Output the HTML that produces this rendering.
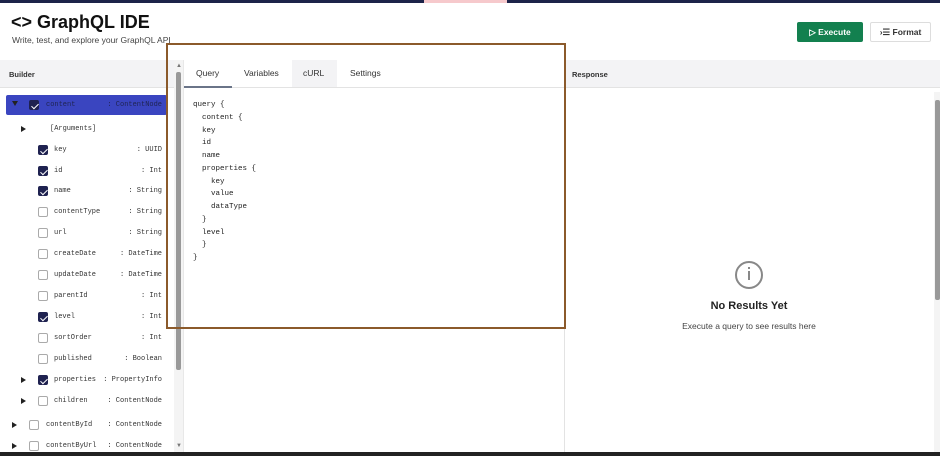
<!DOCTYPE html>
<html><head><style>
*{margin:0;padding:0;box-sizing:border-box}
body{width:940px;height:456px;overflow:hidden;background:#fff;font-family:"Liberation Sans",sans-serif;position:relative}
.a{position:absolute}
.mono{font-family:"Liberation Mono",monospace;font-size:7px;color:#333}
.cb{position:absolute;width:10px;height:10px;border:1px solid #aaa;border-radius:2px;background:#fff}
.cb.on{background:#1f2250;border-color:#1f2250}
.cb.on:after{content:"";position:absolute;left:3px;top:0.5px;width:3px;height:6px;border:solid #fff;border-width:0 1.6px 1.6px 0;transform:rotate(45deg)}
.tri{position:absolute;width:0;height:0;border-left:5px solid #222;border-top:3.5px solid transparent;border-bottom:3.5px solid transparent}
.nm{position:absolute}
.ty{position:absolute;right:778px;text-align:right;white-space:nowrap}
</style></head><body>
<div class="a" style="left:0;top:0;width:940px;height:3px;background:#1c2349"></div>
<div class="a" style="left:424px;top:0;width:83px;height:3px;background:#f6c9cc"></div>
<div class="a" style="left:0;top:452px;width:940px;height:4px;background:#222"></div>

<div class="a" style="left:11px;top:12px;font-size:18px;font-weight:bold;color:#111">&lt;&gt;&nbsp;GraphQL IDE</div>
<div class="a" style="left:12px;top:35px;font-size:8.5px;color:#444">Write, test, and explore your GraphQL API</div>

<div class="a" style="left:797px;top:22px;width:66px;height:20px;background:#13804f;border-radius:2px;color:#fff;font-size:8.5px;font-weight:bold;line-height:20px;text-align:center">▷ Execute</div>
<div class="a" style="left:870px;top:22px;width:61px;height:20px;border:1px solid #ddd;border-radius:2px;color:#333;font-size:8.5px;font-weight:bold;line-height:18px;text-align:center">›☰ Format</div>

<div class="a" style="left:0;top:60px;width:940px;height:28px;background:#f3f3f5;border-bottom:1px solid #e3e3e3"></div>
<div class="a" style="left:9px;top:70px;font-size:7.5px;font-weight:bold;color:#333">Builder</div>
<div class="a" style="left:572px;top:70px;font-size:7.5px;font-weight:bold;color:#333">Response</div>
<div class="a" style="left:183px;top:60px;width:381px;height:28px;background:#fff;border-bottom:1px solid #e3e3e3"></div>
<div class="a" style="left:292px;top:60px;width:45px;height:27px;background:#f3f3f5"></div>
<div class="a" style="left:196px;top:68px;font-size:8.5px;color:#333">Query</div>
<div class="a" style="left:184px;top:86px;width:48px;height:2px;background:#6a7488"></div>
<div class="a" style="left:244px;top:68px;font-size:8.5px;color:#333">Variables</div>
<div class="a" style="left:303px;top:68px;font-size:8.5px;color:#333">cURL</div>
<div class="a" style="left:350px;top:68px;font-size:8.5px;color:#333">Settings</div>
<div class="a" style="left:183px;top:60px;width:1px;height:392px;background:#e8e8e8"></div>
<div class="a" style="left:564px;top:60px;width:1px;height:392px;background:#e3e3e3"></div>

<div class="a" style="left:174px;top:60px;width:9px;height:392px;background:#f4f4f4"></div>
<div class="a" style="left:176px;top:72px;width:5px;height:298px;background:#999;border-radius:2px"></div>
<div class="a" style="left:176px;top:63px;font-size:6px;color:#777">▲</div>
<div class="a" style="left:176px;top:443px;font-size:6px;color:#777">▼</div>
<div class="a" style="left:934px;top:92px;width:6px;height:360px;background:#f4f4f4"></div>
<div class="a" style="left:935px;top:100px;width:5px;height:200px;background:#999;border-radius:2px"></div>

<div class="a" style="left:6px;top:95px;width:161px;height:20px;background:#3a45c0;border-radius:2px"></div>
<div class="a" style="left:12px;top:101px;width:0;height:0;border-top:5px solid #222;border-left:3.5px solid transparent;border-right:3.5px solid transparent"></div>
<div class="cb on" style="left:29px;top:100px"></div>
<div class="mono">
<div class="nm" style="left:46px;top:101px;color:#1f2450">content</div>
<div class="ty" style="top:101px;color:#1f2450">: ContentNode</div>

<div class="tri" style="left:21px;top:126px"></div>
<div class="nm" style="left:50px;top:125px">[Arguments]</div>

<div class="cb on" style="left:38px;top:145px"></div><div class="nm" style="left:54px;top:146px">key</div><div class="ty" style="top:146px">: UUID</div>
<div class="cb on" style="left:38px;top:166px"></div><div class="nm" style="left:54px;top:167px">id</div><div class="ty" style="top:167px">: Int</div>
<div class="cb on" style="left:38px;top:186px"></div><div class="nm" style="left:54px;top:187px">name</div><div class="ty" style="top:187px">: String</div>
<div class="cb" style="left:38px;top:207px"></div><div class="nm" style="left:54px;top:208px">contentType</div><div class="ty" style="top:208px">: String</div>
<div class="cb" style="left:38px;top:228px"></div><div class="nm" style="left:54px;top:229px">url</div><div class="ty" style="top:229px">: String</div>
<div class="cb" style="left:38px;top:249px"></div><div class="nm" style="left:54px;top:250px">createDate</div><div class="ty" style="top:250px">: DateTime</div>
<div class="cb" style="left:38px;top:270px"></div><div class="nm" style="left:54px;top:271px">updateDate</div><div class="ty" style="top:271px">: DateTime</div>
<div class="cb" style="left:38px;top:291px"></div><div class="nm" style="left:54px;top:292px">parentId</div><div class="ty" style="top:292px">: Int</div>
<div class="cb on" style="left:38px;top:312px"></div><div class="nm" style="left:54px;top:313px">level</div><div class="ty" style="top:313px">: Int</div>
<div class="cb" style="left:38px;top:333px"></div><div class="nm" style="left:54px;top:334px">sortOrder</div><div class="ty" style="top:334px">: Int</div>
<div class="cb" style="left:38px;top:354px"></div><div class="nm" style="left:54px;top:355px">published</div><div class="ty" style="top:355px">: Boolean</div>
<div class="tri" style="left:21px;top:377px"></div>
<div class="cb on" style="left:38px;top:375px"></div><div class="nm" style="left:54px;top:376px">properties</div><div class="ty" style="top:376px">: PropertyInfo</div>
<div class="tri" style="left:21px;top:398px"></div>
<div class="cb" style="left:38px;top:396px"></div><div class="nm" style="left:54px;top:397px">children</div><div class="ty" style="top:397px">: ContentNode</div>
<div class="tri" style="left:12px;top:422px"></div>
<div class="cb" style="left:29px;top:420px"></div><div class="nm" style="left:46px;top:421px">contentById</div><div class="ty" style="top:421px">: ContentNode</div>
<div class="tri" style="left:12px;top:443px"></div>
<div class="cb" style="left:29px;top:441px"></div><div class="nm" style="left:46px;top:442px">contentByUrl</div><div class="ty" style="top:442px">: ContentNode</div>
</div>

<pre class="a mono" style="left:193px;top:99px;line-height:12.75px;color:#222;font-size:7.5px">query {
  content {
  key
  id
  name
  properties {
    key
    value
    dataType
  }
  level
  }
}</pre>

<div class="a" style="left:735px;top:261px;width:28px;height:28px;border:2px solid #888;border-radius:50%"></div>
<div class="a" style="left:748px;top:267px;width:2px;height:2px;background:#888"></div>
<div class="a" style="left:748px;top:271px;width:2px;height:9px;background:#888"></div>
<div class="a" style="left:640px;top:300px;width:218px;text-align:center;font-size:11px;font-weight:bold;color:#222">No Results Yet</div>
<div class="a" style="left:640px;top:321px;width:218px;text-align:center;font-size:8.5px;color:#444">Execute a query to see results here</div>

<div class="a" style="left:166px;top:43px;width:400px;height:286px;border:2px solid #8b5a2b"></div>
</body></html>
